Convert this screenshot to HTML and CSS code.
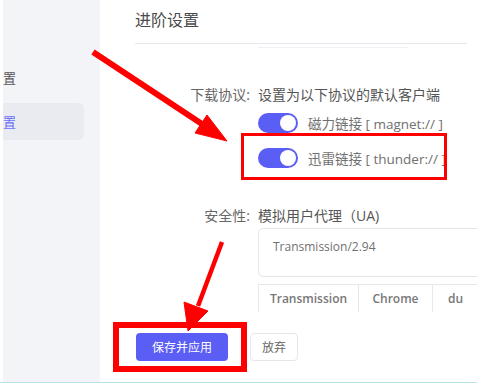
FILE: index.html
```html
<!DOCTYPE html>
<html lang="zh-CN">
<head>
  <meta charset="UTF-8">
  <title>进阶设置</title>
  <link rel="stylesheet" href="styles.css">
</head>
<body>

  <div class="page">
    <!-- Sidebar menu, scrolled off to the left: only the last character shows -->
    <aside class="sidebar">
      <div class="menu-item"><span class="menu-text">置</span></div>
      <div class="menu-item active"><span class="menu-text">置</span></div>
    </aside>

    <main class="content">
      <h2 class="title">进阶设置</h2>
      <div class="ghost-line"></div>

      <!-- Download protocol -->
      <div class="form-row protocol">
        <label class="form-label">下载协议:</label>
        <div class="form-field">
          <div class="hint">设置为以下协议的默认客户端</div>
          <div class="option">
            <span class="switch on"><span class="knob"></span></span>
            <span class="option-text">磁力链接 [ magnet:// ]</span>
          </div>
          <div class="option second">
            <span class="switch on"><span class="knob"></span></span>
            <span class="option-text">迅雷链接 [ thunder:// ]</span>
          </div>
        </div>
      </div>

      <!-- Security -->
      <div class="form-row security">
        <label class="form-label">安全性:</label>
        <div class="form-field">
          <div class="hint">模拟用户代理（UA)</div>
          <div class="ua-box">Transmission/2.94</div>
          <div class="ua-tabs">
            <span class="ua-tab t1">Transmission</span>
            <span class="ua-tab t2">Chrome</span>
            <span class="ua-tab t3">du</span>
          </div>
        </div>
      </div>

      <div class="actions">
        <button class="btn primary">保存并应用</button>
        <button class="btn plain">放弃</button>
      </div>
    </main>
  </div>

  <!-- Red annotations drawn over the screenshot -->
  <svg class="marks" width="477" height="389" viewBox="0 0 477 389">
    <g fill="#ff0000" stroke="#ff0000">
      <line x1="93" y1="52" x2="205" y2="126" stroke-width="6"/>
      <polygon points="195,133 207,115 227,141" stroke-width="1"/>
      <line x1="222" y1="242" x2="198" y2="306" stroke-width="4.5"/>
      <polygon points="184,302 208,311 188,331" stroke-width="1"/>
    </g>
    <rect x="242.5" y="134.5" width="203" height="44" fill="none" stroke="#ff0000" stroke-width="3"/>
    <rect x="116" y="325" width="128" height="44" fill="none" stroke="#ff0000" stroke-width="6"/>
  </svg>

</body>
</html>
```

FILE: styles.css
```css
body {
  margin: 0;
  padding: 0;
  background: #ffffff;
  font-family: "Open Sans", "Noto Sans CJK SC", sans-serif;
  color: #606266;
  overflow: hidden;
}

.page {
  display: flex;
  height: 382px;
  border-bottom: 1px solid #b6e3e9;
}

.sidebar {
  width: 97px;
  margin-left: 3px;
  background: #f3f4f7;
  padding-top: 59px;
  flex-shrink: 0;
}

.menu-item {
  width: 81px;
  height: 37px;
  margin-bottom: 7px;
  display: flex;
  align-items: center;
  border-radius: 0 5px 5px 0;
  font-size: 13px;
  color: #555;
}

.menu-item.active {
  background: #eaebf0;
  color: #6b6ff8;
}

.content {
  padding-left: 35px;
  width: 600px;
  flex-shrink: 0;
}

.title {
  margin: 0;
  width: 332px;
  padding-top: 8px;
  height: 24px;
  padding-bottom: 11px;
  line-height: 24px;
  font-size: 16px;
  font-weight: normal;
  color: #4a4a4a;
  border-bottom: 1px solid #e6e8ec;
}

.ghost-line {
  margin: 3px 0 0 123px;
  width: 150px;
  height: 1px;
  background: #eef0f6;
}

.form-row {
  display: flex;
  gap: 8px;
}

.protocol {
  margin-top: 37px;
}

.security {
  margin-top: 38px;
}

.form-label {
  width: 115px;
  text-align: right;
  font-size: 14px;
  line-height: 20px;
  color: #666;
  flex-shrink: 0;
}

.hint {
  font-size: 14px;
  line-height: 20px;
  color: #555;
  white-space: nowrap;
}

.option {
  display: flex;
  align-items: center;
  gap: 10px;
  height: 20px;
  margin-top: 8px;
}

.option.second {
  margin-top: 15px;
}

.option-text {
  font-size: 13.5px;
  color: #707070;
  white-space: nowrap;
}

.switch {
  width: 40px;
  height: 20px;
  border-radius: 10px;
  background: #5b5ef4;
  display: flex;
  align-items: center;
  justify-content: flex-end;
  padding: 0 2px;
  box-sizing: border-box;
}

.knob {
  width: 16px;
  height: 16px;
  border-radius: 50%;
  background: #fff;
}

.ua-box {
  margin-top: 2px;
  width: 300px;
  height: 49px;
  box-sizing: border-box;
  border: 1px solid #e4e6ea;
  border-radius: 5px;
  padding: 9px 14px;
  font-size: 12px;
  line-height: 18px;
  color: #707070;
}

.ua-tabs {
  margin-top: 7px;
  display: flex;
  height: 28px;
}

.ua-tab {
  border: 1px solid #e6e8ec;
  border-bottom: none;
  border-left: none;
  font-size: 12px;
  font-weight: 600;
  color: #777;
  display: flex;
  align-items: center;
  justify-content: center;
}

.ua-tab.t1 {
  border-left: 1px solid #e6e8ec;
  width: 99px;
}

.ua-tab.t2 {
  width: 73px;
}

.ua-tab.t3 {
  width: 80px;
  justify-content: flex-start;
  padding-left: 15px;
  box-sizing: border-box;
}

.actions {
  margin-top: 21px;
  margin-left: 1px;
  display: flex;
  gap: 22px;
}

.btn {
  height: 28px;
  border-radius: 4px;
  font-family: "Open Sans", "Noto Sans CJK SC", sans-serif;
  font-size: 12px;
  cursor: pointer;
  padding: 0;
}

.primary {
  width: 92px;
  background: #5b5ef4;
  border: none;
  color: #fff;
}

.plain {
  width: 48px;
  background: #fff;
  border: 1px solid #e4e6ea;
  color: #666;
}

.marks {
  position: absolute;
  top: 0;
  left: 0;
  pointer-events: none;
}
```
